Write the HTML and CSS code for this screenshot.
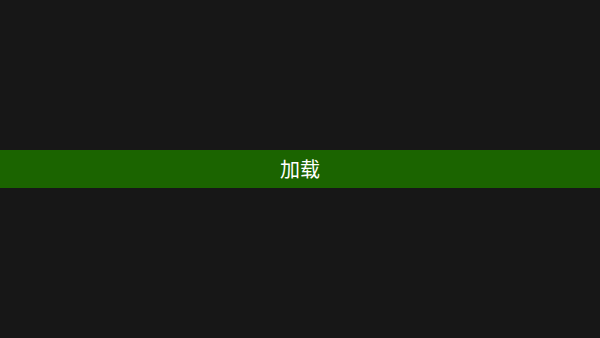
FILE: index.html
```html
<!DOCTYPE html>
<html lang="zh">
<head>
<meta charset="utf-8">
<link rel="stylesheet" href="styles.css">
</head>
<body>
<div class="screen">
  <div class="bar">加载</div>
</div>
</body>
</html>
```
FILE: styles.css
```css
html, body { margin: 0; padding: 0; }
body { background: #171717; }
.screen {
  width: 600px;
  height: 338px;
  display: flex;
  align-items: center;
  background: #171717;
}
.bar {
  width: 100%;
  height: 38px;
  background: #1b6400;
  color: #ffffff;
  display: flex;
  align-items: center;
  justify-content: center;
  font-family: "Noto Sans CJK SC", "Noto Sans", sans-serif;
  font-size: 20px;
  line-height: 1;
}
```
